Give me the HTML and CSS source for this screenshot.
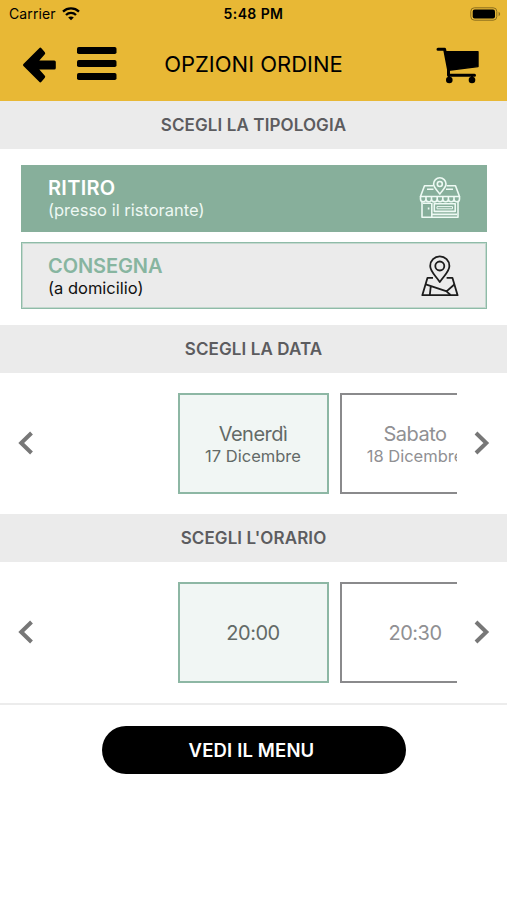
FILE: index.html
```html
<!DOCTYPE html>
<html lang="it">
<head>
    <meta charset="UTF-8">
    <meta name="viewport" content="width=device-width, initial-scale=1.0">
    <title>Opzioni ordine</title>
    <link rel="stylesheet" href="styles.css">
</head>
<body>
    <header class="header">
        <div class="status-bar">
            <div class="carrier">
                <span>Carrier</span>
                <svg width="18" height="14" viewBox="0 0 18 14" fill="none" stroke="#000" stroke-width="2.3">
                    <path d="M1 4.6C5.5 .4 12.5 .4 17 4.6"/>
                    <path d="M4 8C6.8 5.2 11.2 5.2 14 8"/>
                    <path d="M9 13.2L6.2 10.5C7.7 9 10.3 9 11.8 10.5Z" fill="#000" stroke="none"/>
                </svg>
            </div>
            <div class="clock">5:48 PM</div>
            <div class="battery">
                <svg width="31" height="14" viewBox="0 0 31 14">
                    <rect x=".8" y=".8" width="26" height="12.4" rx="3.6" fill="none" stroke="#8a6d1e" stroke-width="1"/>
                    <rect x="2.7" y="2.6" width="22.3" height="8.8" rx="2" fill="#000"/>
                    <path d="M28.6 4.8C30.6 5.6 30.6 8.4 28.6 9.2Z" fill="#8a6d1e"/>
                </svg>
            </div>
        </div>
        <div class="nav-bar">
            <div class="nav-left">
                <svg class="back" width="35" height="36" viewBox="0 0 35 36" stroke="#000" stroke-width="3" stroke-linejoin="round">
                    <path d="M2.5 18L18.3 2.2L21.7 6.2L14 15H32.3V21H14L21.7 29.8L18.3 33.8Z"/>
                </svg>
                <svg width="40" height="34" viewBox="0 0 40 34">
                    <rect x="0" y="0" width="39.5" height="7" rx="1.8"/>
                    <rect x="0" y="13" width="39.5" height="7" rx="1.8"/>
                    <rect x="0" y="26" width="39.5" height="7" rx="1.8"/>
                </svg>
            </div>
            <h1 class="nav-title">OPZIONI ORDINE</h1>
            <div class="nav-right">
                <svg class="cart" width="44" height="37" viewBox="0 0 44 37" fill="none" stroke="#000" stroke-linecap="round" stroke-linejoin="round">
                    <path d="M2 2.2H8.6L12.5 22.5V28.2H38.5" stroke-width="3"/>
                    <path d="M9.6 4.8H42V19.6L12.6 23.2Z" fill="#000" stroke-width="1.4"/>
                    <circle cx="13.3" cy="33" r="3.3" fill="#000" stroke="none"/>
                    <circle cx="36" cy="33" r="3.3" fill="#000" stroke="none"/>
                    <path d="M13 28V33M36 28V33" stroke-width="2"/>
                </svg>
            </div>
        </div>
    </header>

    <h2 class="section-title">SCEGLI LA TIPOLOGIA</h2>
    <div class="options">
        <div class="option selected">
            <div>
                <div class="option-name">RITIRO</div>
                <div class="option-note">(presso il ristorante)</div>
            </div>
            <svg width="42" height="42" viewBox="0 0 42 42" fill="none" stroke="#eefaf4" stroke-width="1.6" stroke-linejoin="round">
                <path d="M14 8.8H5.5L1.5 19.5H40.5L36.5 8.8H27.6"/>
                <path d="M8 12.3H14.5M27 12.3H34"/>
                <path d="M20.8 17C18 13 14.6 10.5 14.6 7A6.2 6.2 0 0 1 27 7C27 10.5 23.6 13 20.8 17Z"/>
                <circle cx="20.8" cy="7" r="2.5"/>
                <path d="M1.5 19.5V22A2.6 2.6 0 0 0 7 22A2.6 2.6 0 0 0 12.5 22A2.6 2.6 0 0 0 18.2 22A2.6 2.6 0 0 0 23.8 22A2.6 2.6 0 0 0 29.4 22A2.6 2.6 0 0 0 35 22A2.6 2.6 0 0 0 40.5 22V19.5M7 20V22M12.5 20V22M18.2 20V22M23.8 20V22M29.4 20V22M35 20V22"/>
                <path d="M3 24V40.2H39V24M12.8 26V40M4 26.3H12M15.3 26.8H36.2V34.4H15.3ZM13 37.4H38M9.6 30.5V32.5"/>
                <path d="M18 29.6H33.5V31.8H18Z" stroke-width="1"/>
            </svg>
        </div>
        <div class="option delivery">
            <div>
                <div class="option-name">CONSEGNA</div>
                <div class="option-note">(a domicilio)</div>
            </div>
            <svg width="42" height="42" viewBox="0 0 42 42" fill="none" stroke="#1c1c1c" stroke-width="1.8" stroke-linejoin="round">
                <path d="M20.8 27C16.5 20.5 11.2 16.5 11.2 11A9.6 9.6 0 0 1 30.4 11C30.4 16.5 25.1 20.5 20.8 27Z"/>
                <circle cx="20.8" cy="11" r="4.5"/>
                <path d="M14 22.8H8.5L3.3 40.2H38.6L33.4 22.8H27.6"/>
                <path d="M6.8 29.3L27.8 36.4M11.8 31L10.8 40M35.3 29.5L27.5 36.4L31.5 40"/>
            </svg>
        </div>
    </div>

    <h2 class="section-title">SCEGLI LA DATA</h2>
    <div class="slider">
        <svg class="arrow" width="16" height="24" viewBox="0 0 16 24"><path d="M14.5 2L4.2 12L14.5 22"/></svg>
        <div class="slides">
            <div class="slide active">
                <div class="slide-main">Venerdì</div>
                <div class="slide-sub">17 Dicembre</div>
            </div>
            <div class="slide">
                <div class="slide-main">Sabato</div>
                <div class="slide-sub">18 Dicembre</div>
            </div>
        </div>
        <svg class="arrow" width="16" height="24" viewBox="0 0 16 24"><path d="M2 2L12.3 12L2 22"/></svg>
    </div>

    <h2 class="section-title">SCEGLI L'ORARIO</h2>
    <div class="slider">
        <svg class="arrow" width="16" height="24" viewBox="0 0 16 24"><path d="M14.5 2L4.2 12L14.5 22"/></svg>
        <div class="slides">
            <div class="slide active">
                <div class="slide-main">20:00</div>
            </div>
            <div class="slide">
                <div class="slide-main">20:30</div>
            </div>
        </div>
        <svg class="arrow" width="16" height="24" viewBox="0 0 16 24"><path d="M2 2L12.3 12L2 22"/></svg>
    </div>

    <footer class="footer">
        <button type="button" class="menu-button">VEDI IL MENU</button>
    </footer>
</body>
</html>
```
FILE: styles.css
```css
* {
    box-sizing: border-box;
}

body {
    font-family: Inter, "Liberation Sans", sans-serif;
    background-color: #fff;
    margin: 0;
    overflow: hidden;
}

svg {
    display: block;
    flex: none;
}

.header {
    height: 101px;
    background-color: #e8b835;
    color: #000;
}

.status-bar {
    display: grid;
    grid-template-columns: 1fr auto 1fr;
    align-items: center;
    height: 27px;
    padding: 0 6px;
    font-size: 14px;
}

.carrier {
    display: flex;
    align-items: center;
    gap: 6px;
    padding-left: 3px;
    letter-spacing: 0.1px;
}

.clock {
    font-weight: 600;
    letter-spacing: 0.4px;
}

.battery {
    display: flex;
    justify-content: flex-end;
}

.nav-bar {
    display: grid;
    grid-template-columns: 1fr auto 1fr;
    align-items: center;
    height: 74px;
    padding: 0 22px;
}

.nav-left {
    display: flex;
    align-items: center;
    gap: 20px;
}

.back {
    margin-top: 2px;
}

.nav-title {
    margin: 0;
    padding-bottom: 1px;
    font-size: 22px;
    font-weight: 400;
}

.nav-right {
    display: flex;
    justify-content: flex-end;
    padding: 2px 5px 0 0;
}

.section-title {
    display: flex;
    align-items: center;
    justify-content: center;
    height: 48px;
    margin: 0;
    background-color: #ebebeb;
    color: #5c5c5f;
    font-size: 17px;
    font-weight: 600;
    letter-spacing: 0.1px;
}

.options {
    display: flex;
    flex-direction: column;
    gap: 10.5px;
    padding: 15.5px 20px 15.5px 21px;
}

.option {
    display: flex;
    align-items: center;
    justify-content: space-between;
    height: 67px;
    padding: 0 25px 0 26px;
    border: 1px solid #8fbba8;
    box-shadow: inset 0 0 0 1px #c4d8ce;
    background-color: #ebebeb;
    color: #111;
}

.option.selected {
    border-color: #87af9b;
    box-shadow: none;
    background-color: #87af9b;
    color: #eef8f3;
}

.option-name {
    color: #87b5a0;
    font-size: 20px;
    font-weight: 600;
    line-height: 24px;
    letter-spacing: 0.3px;
}

.selected .option-name {
    color: #fff;
}

.delivery {
    padding-top: 1px;
}

.delivery .option-name {
    letter-spacing: -0.1px;
}

.option-note {
    font-size: 16.5px;
    line-height: 21px;
}

.slider {
    display: flex;
    align-items: center;
    justify-content: space-between;
    height: 141.3px;
    padding: 0 17px;
}

.arrow {
    fill: none;
    stroke: #777;
    stroke-width: 4;
}

.slides {
    display: flex;
    gap: 11px;
    width: 406px;
    padding-left: 127px;
    overflow: hidden;
}

.slide {
    display: flex;
    flex: none;
    flex-direction: column;
    align-items: center;
    justify-content: center;
    width: 151px;
    height: 101px;
    padding-top: 1px;
    border: 2px solid #8a8a8c;
    color: #909093;
}

.slide.active {
    border-color: #8db7a4;
    background-color: #f1f6f4;
    color: #636a67;
}

.slide-main {
    font-size: 20px;
    line-height: 24px;
    letter-spacing: -0.5px;
}

.slide-sub {
    font-size: 16.5px;
    line-height: 20px;
}

.footer {
    display: flex;
    justify-content: center;
    padding-top: 21px;
    border-top: 2px solid #ececec;
}

.menu-button {
    width: 304px;
    height: 48px;
    padding: 0 4px 0 0;
    border: none;
    border-radius: 24px;
    background-color: #000;
    color: #fff;
    font-family: inherit;
    font-size: 18.5px;
    font-weight: 600;
    letter-spacing: 0.15px;
    cursor: pointer;
}
```
